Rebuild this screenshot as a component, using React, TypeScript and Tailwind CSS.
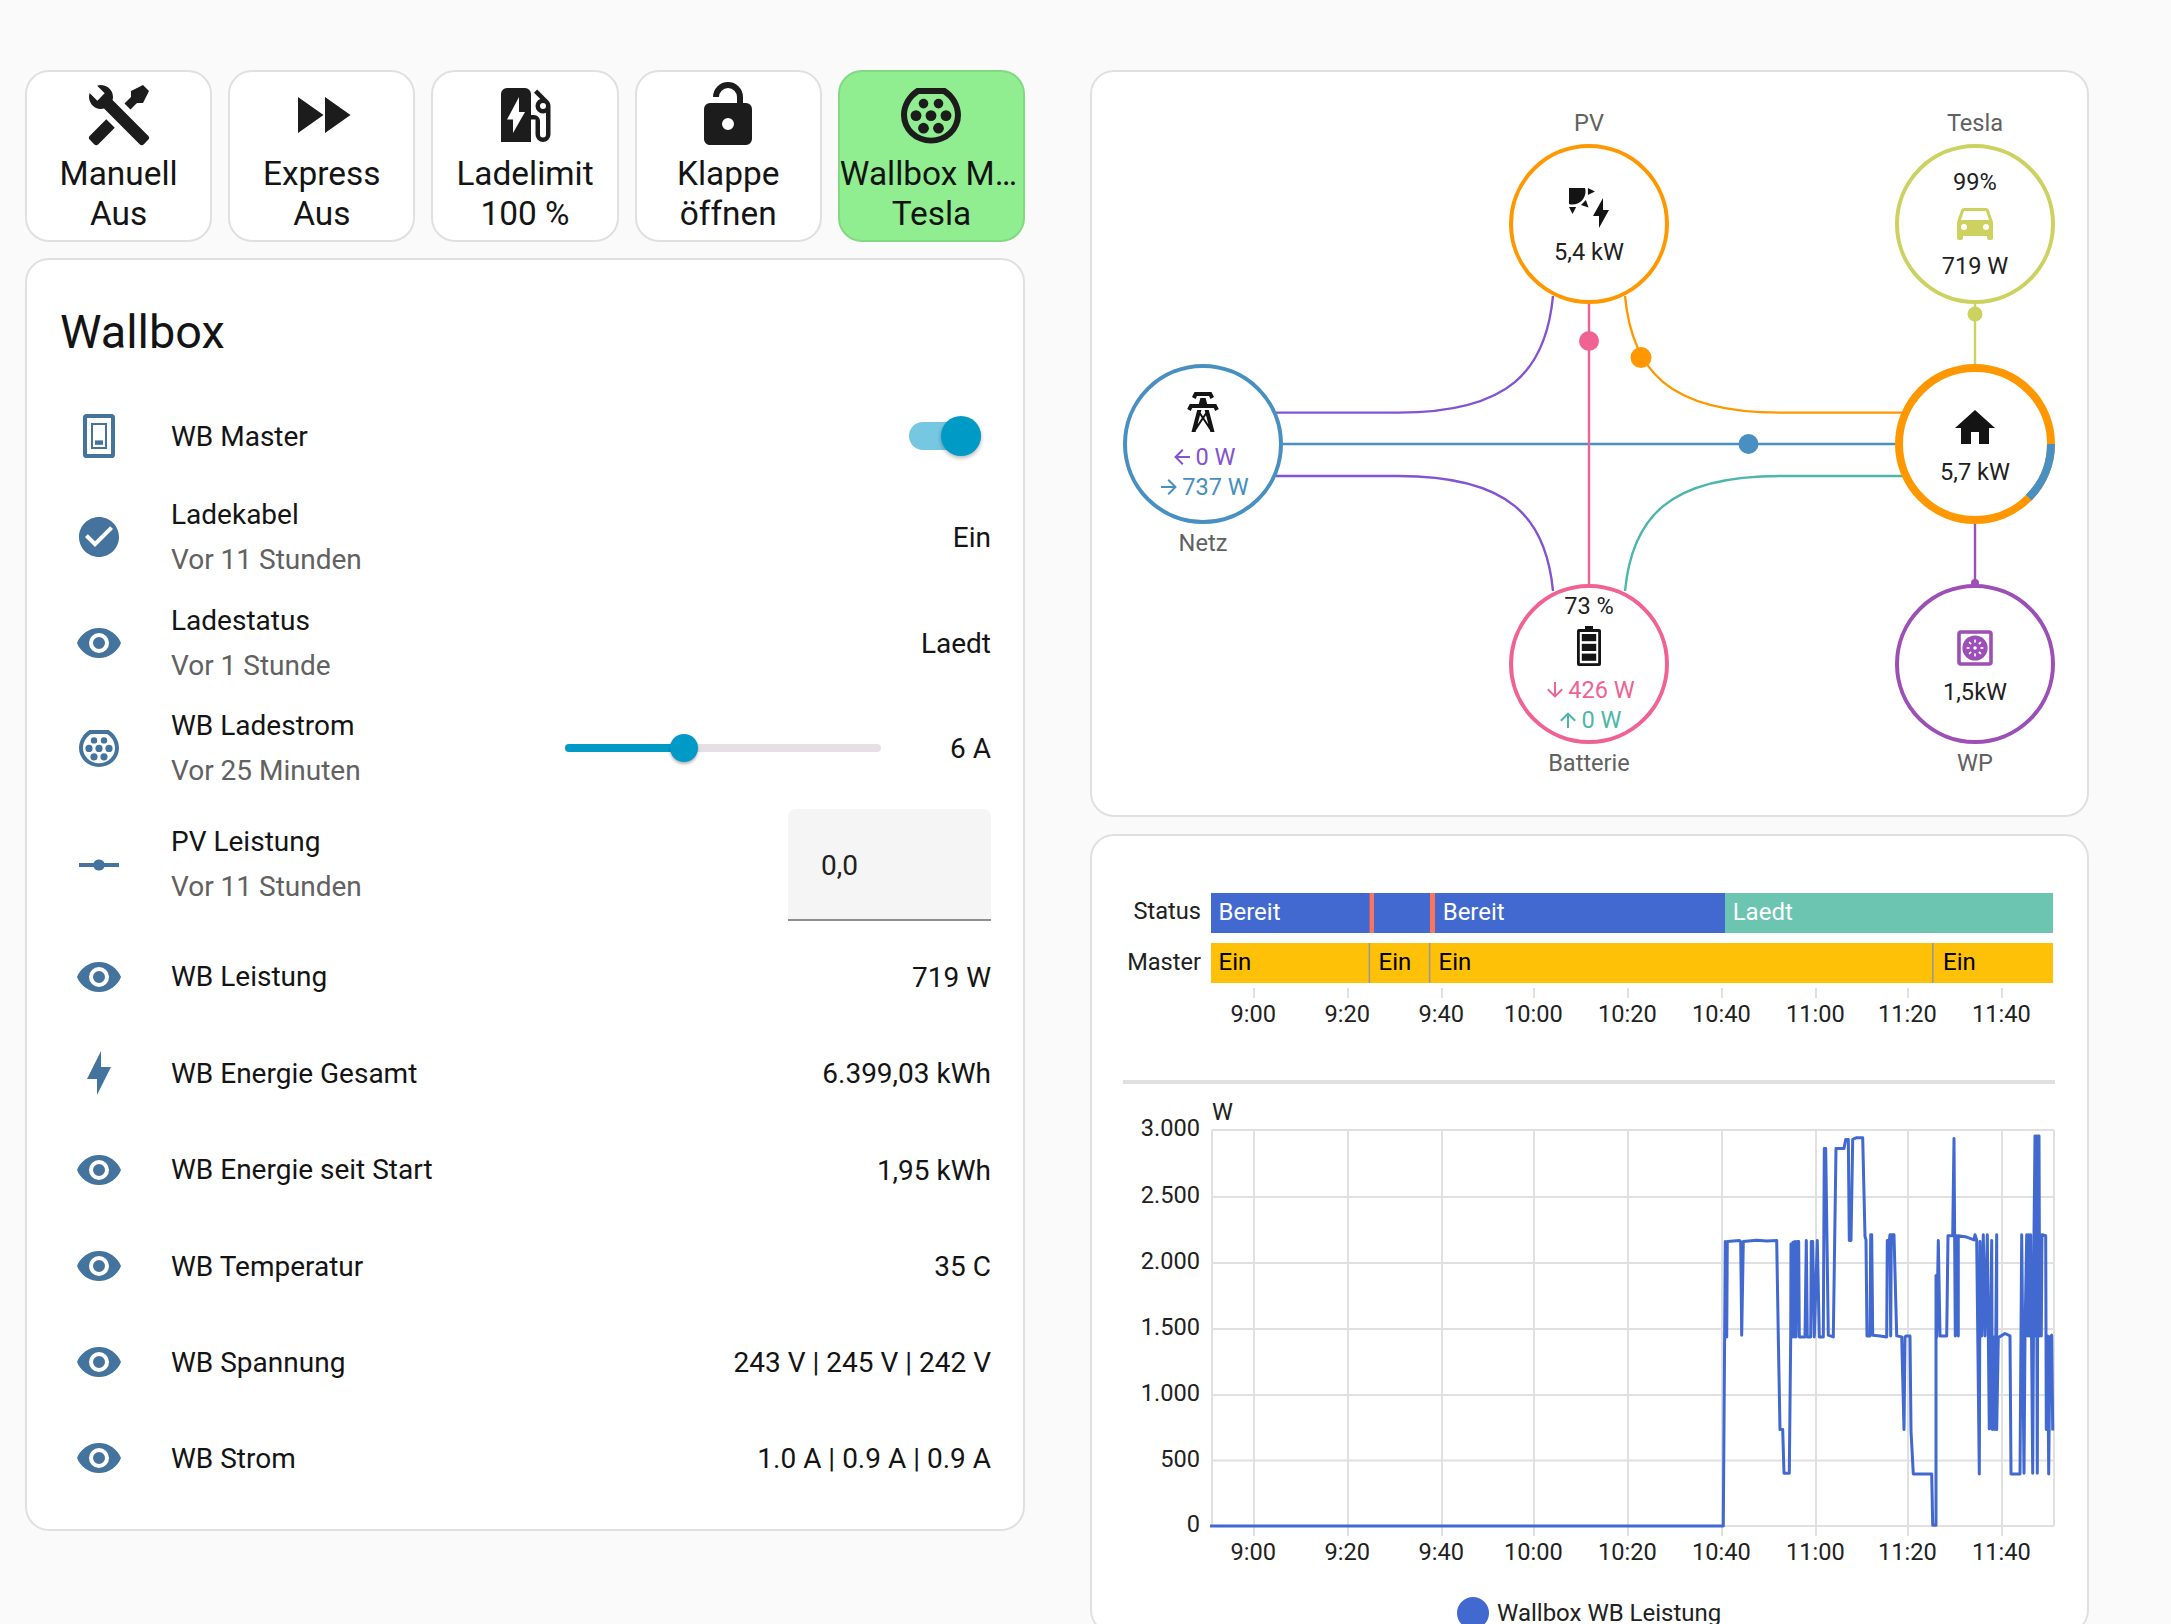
import React from "react";

const tools = "M21.71 20.29L20.29 21.71A1 1 0 0 1 18.88 21.71L7 9.85A3.81 3.81 0 0 1 6 10A4 4 0 0 1 2.22 4.7L4.76 7.24L5.29 6.71L6.71 5.29L7.24 4.76L4.7 2.22A4 4 0 0 1 10 6A3.81 3.81 0 0 1 9.85 7L21.71 18.88A1 1 0 0 1 21.71 20.29M2.29 18.88A1 1 0 0 0 2.29 20.29L3.71 21.71A1 1 0 0 0 5.12 21.71L10.59 16.25L7.76 13.42M20 2L16 4V6L13.83 8.17L15.83 10.17L18 8H20L22 4Z";
const fastForward = "M13,6V18L21.5,12M4,18L12.5,12L4,6V18Z";
const evStation = "M19.77,7.23L19.78,7.22L16.06,3.5L15,4.56L17.11,6.67C16.17,7 15.5,7.93 15.5,9A2.5,2.5 0 0,0 18,11.5C18.36,11.5 18.69,11.42 19,11.29V18.5A1,1 0 0,1 18,19.5A1,1 0 0,1 17,18.5V14A2,2 0 0,0 15,12H14V5A2,2 0 0,0 12,3H6A2,2 0 0,0 4,5V21H14V13.5H15.5V18.5A2.5,2.5 0 0,0 18,21A2.5,2.5 0 0,0 20.5,18.5V9C20.5,8.31 20.22,7.68 19.77,7.23M18,10A1,1 0 0,1 17,9A1,1 0 0,1 18,8A1,1 0 0,1 19,9A1,1 0 0,1 18,10M8,18V13.5H6L10,6V11H12L8,18Z";
const lockOpen = "M18,8A2,2 0 0,1 20,10V20A2,2 0 0,1 18,22H6C4.89,22 4,21.1 4,20V10A2,2 0 0,1 6,8H15V6A3,3 0 0,0 12,3A3,3 0 0,0 9,6H7A5,5 0 0,1 12,1A5,5 0 0,1 17,6V8H18M12,17A2,2 0 0,0 14,15A2,2 0 0,0 12,13A2,2 0 0,0 10,15A2,2 0 0,0 12,17Z";
const checkCircle = "M12 2C6.5 2 2 6.5 2 12S6.5 22 12 22 22 17.5 22 12 17.5 2 12 2M10 17L5 12L6.41 10.59L10 14.17L17.59 6.58L19 8L10 17Z";
const eye = "M12,9A3,3 0 0,0 9,12A3,3 0 0,0 12,15A3,3 0 0,0 15,12A3,3 0 0,0 12,9M12,17A5,5 0 0,1 7,12A5,5 0 0,1 12,7A5,5 0 0,1 17,12A5,5 0 0,1 12,17M12,4.5C7,4.5 2.73,7.61 1,12C2.73,16.39 7,19.5 12,19.5C17,19.5 21.27,16.39 23,12C21.27,7.61 17,4.5 12,4.5Z";
const rayVertex = "M2 11.5H9.3C9.7 10.3 10.7 9.7 12 9.7S14.3 10.3 14.7 11.5H22V13.5H14.7C14.3 14.7 13.3 15.3 12 15.3S9.7 14.7 9.3 13.5H2V11.5Z";
const bolt = "M11 15H6L13 1V9H18L11 23V15Z";
const home = "M10,20V14H14V20H19V12H22L12,3L2,12H5V20H10Z";
const tower = "M8.28,5.45L6.5,4.55L7.76,2H16.24L17.5,4.55L15.72,5.45L15,4H9L8.28,5.45M18.62,8H14.09L13.3,5H10.7L9.91,8H5.38L4.1,10.55L5.89,11.44L6.62,10H17.38L18.1,11.44L19.89,10.55L18.62,8M17.77,22H15.7L15.46,21.1L12,15.9L8.53,21.1L8.3,22H6.23L9.12,11H11.19L10.83,12.35L12,14.1L13.16,12.35L12.81,11H14.88L17.77,22M11.4,15L10.5,13.65L9.32,18.13L11.4,15M14.68,18.12L13.5,13.64L12.6,15L14.68,18.12Z";
const solarPower = "M11.45,2V5.55L15,3.77L11.45,2M10.45,8L8,10.46L11.75,11.71L10.45,8M2,11.45L3.77,15L5.55,11.45H2M10,2H2V10C2.57,10.17 3.17,10.25 3.77,10.25C7.35,10.26 10.26,7.35 10.27,3.75C10.26,3.16 10.17,2.57 10,2M17,22V16H14L19,7V13H22L17,22Z";
const car = "M5,11L6.5,6.5H17.5L19,11M17.5,16A1.5,1.5 0 0,1 16,14.5A1.5,1.5 0 0,1 17.5,13A1.5,1.5 0 0,1 19,14.5A1.5,1.5 0 0,1 17.5,16M6.5,16A1.5,1.5 0 0,1 5,14.5A1.5,1.5 0 0,1 6.5,13A1.5,1.5 0 0,1 8,14.5A1.5,1.5 0 0,1 6.5,16M18.92,6C18.72,5.42 18.16,5 17.5,5H6.5C5.84,5 5.28,5.42 5.08,6L3,12V20A1,1 0 0,0 4,21H5A1,1 0 0,0 6,20V19H18V20A1,1 0 0,0 19,21H20A1,1 0 0,0 21,20V12L18.92,6Z";
const arrowLeft = "M20,11V13H8L13.5,18.5L12.08,19.92L4.16,12L12.08,4.08L13.5,5.5L8,11H20Z";
const arrowRight = "M4,11V13H16L10.5,18.5L11.92,19.92L19.84,12L11.92,4.08L10.5,5.5L16,11H4Z";
const arrowDown = "M11,4H13V16L18.5,10.5L19.92,11.92L12,19.84L4.08,11.92L5.5,10.5L11,16V4Z";
const arrowUp = "M13,20H11V8L5.5,13.5L4.08,12.08L12,4.16L19.92,12.08L18.5,13.5L13,8V20Z";

function Icon({ d, className }: { d: string; className: string }) {
  return (
    <svg viewBox="0 0 24 24" className={"fill-current shrink-0 " + className}>
      <path d={d} />
    </svg>
  );
}

function PlugIcon({ className }: { className: string }) {
  return (
    <svg viewBox="0 0 24 24" className={"fill-current shrink-0 " + className}>
      <path
        fillRule="evenodd"
        d="M7.2 3H16.8C20 5 22 8.5 22 12A10 9.5 0 0 1 2 12C2 8.5 4 5 7.2 3ZM8 5C5.5 6.6 4 9.2 4 12A8 7.6 0 0 0 20 12C20 9.2 18.5 6.6 16 5Z"
      />
      <circle cx="9.5" cy="8.2" r="1.6" />
      <circle cx="14.5" cy="8.2" r="1.6" />
      <circle cx="7" cy="12.2" r="1.8" />
      <circle cx="12" cy="12.2" r="1.8" />
      <circle cx="17" cy="12.2" r="1.8" />
      <circle cx="9.5" cy="16.4" r="1.8" />
      <circle cx="14.5" cy="16.4" r="1.8" />
    </svg>
  );
}

function SwitchIcon({ className }: { className: string }) {
  return (
    <svg viewBox="0 0 24 24" className={"shrink-0 " + className}>
      <rect x="5" y="2" width="14" height="20" rx="0.8" fill="none" stroke="currentColor" strokeWidth="2" />
      <rect x="8.5" y="6" width="7" height="12" fill="none" stroke="currentColor" strokeWidth="1" />
      <rect x="10" y="14.2" width="4" height="2.2" fill="currentColor" />
    </svg>
  );
}

function BatteryIcon() {
  return (
    <svg viewBox="0 0 24 24" className="size-[48px] shrink-0">
      <path d="M10 2H14V3.5H17A1 1 0 0 1 18 4.5V21A1 1 0 0 1 17 22H7A1 1 0 0 1 6 21V4.5A1 1 0 0 1 7 3.5H10Z" fill="#141414" />
      <rect x="7.4" y="5" width="9.2" height="15.6" fill="#ffffff" />
      <rect x="8.4" y="6" width="7.2" height="3.6" fill="#141414" />
      <rect x="8.4" y="10.9" width="7.2" height="3.6" fill="#141414" />
      <rect x="8.4" y="15.8" width="7.2" height="3.6" fill="#141414" />
    </svg>
  );
}

function HeatPumpIcon() {
  const spokes = [0, 45, 90, 135, 180, 225, 270, 315];
  return (
    <svg viewBox="0 0 24 24" className="size-[48px] shrink-0 text-[#9b4fb7]">
      <rect x="4" y="4" width="16" height="16" rx="1" fill="none" stroke="currentColor" strokeWidth="1.8" />
      <circle cx="12" cy="12" r="6.3" fill="currentColor" />
      <circle cx="12" cy="12" r="0.9" fill="#ffffff" />
      {spokes.map((a) => (
        <rect key={a} x="11.6" y="7.8" width="0.8" height="1.5" fill="#ffffff" transform={`rotate(${a} 12 12)`} />
      ))}
    </svg>
  );
}

function ActionButton({ icon, name, state, active }: { icon: React.ReactNode; name: string; state: string; active?: boolean }) {
  return (
    <div
      className={
        "flex-1 min-w-0 h-[172px] rounded-[24px] border-2 pt-[7px] flex flex-col items-center text-[33.4px] leading-[40px] text-[#141414] " +
        (active ? "bg-[#90ee90] border-[#82d982]" : "bg-white border-[#e0e0e0]")
      }
    >
      {icon}
      <div className="w-full text-center truncate mt-[3px]">{name}</div>
      <div className="w-full text-center truncate">{state}</div>
    </div>
  );
}

function Row({ icon, name, sub, h, children }: { icon: React.ReactNode; name: string; sub?: string; h: string; children?: React.ReactNode }) {
  return (
    <div className={"flex items-center pl-[48px] pr-[32px] text-[28px] " + h}>
      <div className="w-[48px] shrink-0 text-[#44739e] flex justify-center">{icon}</div>
      <div className="ml-[48px] leading-[45px] whitespace-nowrap">
        <div className="text-[#141414]">{name}</div>
        {sub && <div className="text-[#616161]">{sub}</div>}
      </div>
      <div className="ml-auto mt-[2px] flex items-center text-[#141414]">{children}</div>
    </div>
  );
}

function WallboxCard() {
  const eyeIcon = <Icon d={eye} className="size-[48px]" />;
  return (
    <div className="rounded-[24px] border-2 border-[#e0e0e0] bg-white pb-[23px]">
      <div className="pl-[33px] pt-[40px] pb-[24px] text-[46.8px] leading-[64px] text-[#141414]">Wallbox</div>
      <Row icon={<SwitchIcon className="size-[48px]" />} name="WB Master" h="h-[96px]">
        <div className="relative w-[72px] h-[28px] mr-[10px] mb-[2px] rounded-full bg-[#76c8e2]">
          <div className="absolute right-0 top-[-6px] size-[40px] rounded-full bg-[#009ac7] shadow-[0_2px_4px_rgba(0,0,0,0.3)]" />
        </div>
      </Row>
      <Row icon={<Icon d={checkCircle} className="size-[48px]" />} name="Ladekabel" sub="Vor 11 Stunden" h="h-[106px]">Ein</Row>
      <Row icon={eyeIcon} name="Ladestatus" sub="Vor 1 Stunde" h="h-[105px]">Laedt</Row>
      <Row icon={<PlugIcon className="size-[48px]" />} name="WB Ladestrom" sub="Vor 25 Minuten" h="h-[105px]">
        <div className="relative w-[316px] h-[8px] mb-[2px] rounded-full bg-[#e6e0e6]">
          <div className="w-[119px] h-full rounded-full bg-[#009ac7]" />
          <div className="absolute left-[105px] top-[-10px] size-[28px] rounded-full bg-[#009ac7] shadow-[0_2px_3px_rgba(0,0,0,0.3)]" />
        </div>
        <div className="w-[110px] text-right">6 A</div>
      </Row>
      <Row icon={<Icon d={rayVertex} className="size-[48px]" />} name="PV Leistung" sub="Vor 11 Stunden" h="h-[128px]">
        <div className="w-[203px] h-[112px] rounded-t-[8px] bg-[#f5f5f5] border-b-2 border-[#8e8e8e] pl-[33px] pt-[4px] flex items-center text-[#212121]">0,0</div>
      </Row>
      <Row icon={eyeIcon} name="WB Leistung" h="h-[97px]">719 W</Row>
      <Row icon={<Icon d={bolt} className="size-[48px]" />} name="WB Energie Gesamt" h="h-[96px]">6.399,03 kWh</Row>
      <Row icon={eyeIcon} name="WB Energie seit Start" h="h-[97px]">1,95 kWh</Row>
      <Row icon={eyeIcon} name="WB Temperatur" h="h-[96px]">35 C</Row>
      <Row icon={eyeIcon} name="WB Spannung" h="h-[96px]">243 V | 245 V | 242 V</Row>
      <Row icon={eyeIcon} name="WB Strom" h="h-[96px]">1.0 A | 0.9 A | 0.9 A</Row>
    </div>
  );
}

// diagram node: sits on the free canvas of the flow card
function FlowNode({ pos, ring, label, labelPos, children }: { pos: string; ring: string; label?: string; labelPos?: string; children: React.ReactNode }) {
  return (
    <div className={"absolute size-[160px] " + pos}>
      <div className={"size-full rounded-full flex flex-col items-center text-[23.6px] text-[#212121] whitespace-nowrap " + ring}>{children}</div>
      {label && <div className={"absolute inset-x-0 text-center text-[23.6px] leading-[32px] text-[#616161] " + labelPos}>{label}</div>}
    </div>
  );
}

function FlowCard() {
  return (
    <div className="relative h-[747px] rounded-[24px] border-2 border-[#e0e0e0] bg-white">
      <svg viewBox="1092 72 995 743" className="absolute inset-0 w-[995px] h-[743px]" fill="none" strokeWidth="2.4">
        <path d="M1276 412.6H1398C1510 412.6 1546 370 1553 296" stroke="#8353d1" />
        <path d="M1276 476H1398C1510 476 1546 518 1553 591" stroke="#8353d1" />
        <path d="M1625 296C1632 370 1668 412.6 1780 412.6H1903" stroke="#ff9800" />
        <path d="M1903 476H1780C1668 476 1632 518 1625 591" stroke="#4db6ac" />
        <path d="M1283 444H1897" stroke="#488fc2" />
        <path d="M1589 303V585" stroke="#f06292" />
        <path d="M1975 303V366" stroke="#cdd15f" />
        <path d="M1975 522V585" stroke="#9b4fb7" />
        <circle cx="1748.5" cy="444" r="10" fill="#488fc2" stroke="none" />
        <circle cx="1589" cy="341" r="10" fill="#f06292" stroke="none" />
        <circle cx="1641" cy="357.6" r="10.5" fill="#ff9800" stroke="none" />
        <circle cx="1975" cy="314" r="7.5" fill="#cdd15f" stroke="none" />
        <circle cx="1975" cy="583" r="4" fill="#9b4fb7" stroke="none" />
        <circle cx="1975" cy="444" r="76" stroke="#ff9800" strokeWidth="8" />
        <path d="M2051 444A76 76 0 0 1 2028.7 497.7" stroke="#488fc2" strokeWidth="8" />
      </svg>

      <FlowNode pos="left-[417px] top-[72px]" ring="border-4 border-[#ff9800] pt-[36px]" label="PV" labelPos="top-[-37px]">
        <Icon d={solarPower} className="size-[48px] text-[#141414]" />
        <div className="leading-[40px]">5,4 kW</div>
      </FlowNode>
      <FlowNode pos="left-[803px] top-[72px]" ring="border-4 border-[#cdd15f] pt-[18px]" label="Tesla" labelPos="top-[-37px]">
        <div className="leading-[32px]">99%</div>
        <Icon d={car} className="size-[48px] text-[#cdd15f]" />
        <div className="leading-[32px] mt-[4px]">719 W</div>
      </FlowNode>
      <FlowNode pos="left-[31px] top-[292px]" ring="border-4 border-[#488fc2] pt-[20px]" label="Netz" labelPos="top-[163px]">
        <Icon d={tower} className="size-[48px] text-[#141414]" />
        <div className="leading-[30px] mt-[6px] flex items-center gap-[1px] text-[#8353d1]">
          <Icon d={arrowLeft} className="size-[24px]" />0 W
        </div>
        <div className="leading-[30px] flex items-center gap-[1px] text-[#488fc2]">
          <Icon d={arrowRight} className="size-[24px]" />737 W
        </div>
      </FlowNode>
      <FlowNode pos="left-[803px] top-[292px]" ring="pt-[40px]">
        <Icon d={home} className="size-[48px] text-[#141414]" />
        <div className="leading-[40px]">5,7 kW</div>
      </FlowNode>
      <FlowNode pos="left-[417px] top-[512px]" ring="border-4 border-[#f06292] pt-[4px]" label="Batterie" labelPos="top-[163px]">
        <div className="leading-[28px]">73 %</div>
        <div className="mt-[2px]"><BatteryIcon /></div>
        <div className="leading-[30px] mt-[5px] flex items-center gap-[1px] text-[#f06292]">
          <Icon d={arrowDown} className="size-[24px]" />426 W
        </div>
        <div className="leading-[30px] flex items-center gap-[1px] text-[#4db6ac]">
          <Icon d={arrowUp} className="size-[24px]" />0 W
        </div>
      </FlowNode>
      <FlowNode pos="left-[803px] top-[512px]" ring="border-4 border-[#9b4fb7] pt-[36px]" label="WP" labelPos="top-[163px]">
        <HeatPumpIcon />
        <div className="leading-[40px]">1,5kW</div>
      </FlowNode>
    </div>
  );
}

const axisTicks: [number, string][] = [
  [1254, "9:00"], [1348, "9:20"], [1442, "9:40"], [1534, "10:00"], [1628, "10:20"],
  [1722, "10:40"], [1816, "11:00"], [1908, "11:20"], [2002, "11:40"],
];
const yTicks: [number, string][] = [
  [1130, "3.000"], [1197, "2.500"], [1263, "2.000"], [1329, "1.500"], [1395, "1.000"], [1460.6, "500"], [1526, "0"],
];

// traced from the chart, x = 1680 + tx / 3, y = 1090 + ty / 2.936
const trace = [
  [-1410,1280],[130,1280],[136,445],[140,725],[142,445],[178,442],[182,445],[185,720],[190,445],[230,441],[260,443],[290,442],[295,725],[300,997],[308,997],[312,1125],[328,1125],[332,725],[333,452],[337,725],[339,447],[343,725],[345,445],[348,725],[352,445],[356,445],[358,725],[375,725],[379,442],[382,725],[392,725],[394,445],[398,445],[403,725],[412,442],[418,725],[430,725],[433,172],[437,172],[445,720],[460,725],[468,172],[492,172],[497,145],[505,145],[508,442],[513,442],[518,145],[530,140],[548,140],[555,430],[558,440],[561,722],[570,722],[572,425],[575,425],[578,720],[600,722],[620,725],[622,442],[628,442],[630,425],[632,722],[634,425],[642,425],[650,722],[665,725],[672,997],[675,725],[680,722],[690,722],[693,1000],[700,1127],[755,1127],[758,1278],[768,1278],[768,545],[770,725],[775,442],[780,722],[800,722],[804,428],[818,428],[822,142],[826,722],[830,428],[835,722],[835,428],[860,432],[882,440],[885,425],[890,440],[898,1127],[900,445],[905,722],[910,425],[915,722],[922,425],[928,995],[935,442],[937,997],[942,725],[945,997],[950,425],[950,997],[955,727],[975,715],[990,722],[993,1127],[1020,1127],[1025,425],[1032,1125],[1035,722],[1040,425],[1043,722],[1046,425],[1049,722],[1052,425],[1058,1125],[1062,425],[1065,135],[1067,722],[1069,135],[1072,1125],[1074,135],[1077,135],[1079,722],[1082,425],[1084,722],[1086,425],[1097,428],[1099,997],[1103,722],[1106,1127],[1110,725],[1115,720],[1118,1000],
];
const tracePoints = trace.map(([x, y]) => `${(1680 + x / 3).toFixed(1)},${(1090 + y / 2.936).toFixed(1)}`).join(" ");

function ChartText({ x, y, anchor, fill, size, children }: { x: number; y: number; anchor?: "start" | "middle" | "end"; fill?: string; size?: number; children: React.ReactNode }) {
  return (
    <text x={x} y={y} textAnchor={anchor ?? "start"} dominantBaseline="central" fill={fill ?? "#212121"} fontSize={size ?? 23.6}>
      {children}
    </text>
  );
}

function HistoryCard() {
  return (
    <div className="h-[800px] rounded-[24px] border-2 border-[#e0e0e0] bg-white">
      <svg viewBox="1092 836 995 790" className="w-[995px] h-[790px]">
        {/* state timeline */}
        <ChartText x={1201} y={911} anchor="end">Status</ChartText>
        <ChartText x={1201} y={962} anchor="end">Master</ChartText>
        <rect x="1211" y="893" width="514" height="40" fill="#4269d0" />
        <rect x="1369.6" y="893" width="4.4" height="40" fill="#ff725c" />
        <rect x="1430" y="893" width="5" height="40" fill="#ff725c" />
        <rect x="1725" y="893" width="328" height="40" fill="#6cc5b0" />
        <rect x="1211" y="943" width="842" height="40" fill="#ffc107" />
        <rect x="1368.6" y="943" width="1.6" height="40" fill="#999999" />
        <rect x="1428.8" y="943" width="1.6" height="40" fill="#999999" />
        <rect x="1932" y="943" width="1.6" height="40" fill="#999999" />
        <ChartText x={1218.5} y={912} fill="#ffffff" size={24}>Bereit</ChartText>
        <ChartText x={1442.7} y={912} fill="#ffffff" size={24}>Bereit</ChartText>
        <ChartText x={1732.7} y={912} fill="#ffffff" size={24}>Laedt</ChartText>
        <ChartText x={1218.5} y={962} fill="#000000" size={24}>Ein</ChartText>
        <ChartText x={1378.5} y={962} fill="#000000" size={24}>Ein</ChartText>
        <ChartText x={1438.5} y={962} fill="#000000" size={24}>Ein</ChartText>
        <ChartText x={1943} y={962} fill="#000000" size={24}>Ein</ChartText>
        {axisTicks.map(([x, t]) => (
          <g key={t}>
            <line x1={x} x2={x} y1="988" y2="998" stroke="#e0e0e0" strokeWidth="2" />
            <ChartText x={x - 0.7} y={1013.5} anchor="middle">{t}</ChartText>
          </g>
        ))}
        <rect x="1123" y="1080" width="932" height="4" fill="#e0e0e0" />

        {/* power chart */}
        <ChartText x={1212} y={1112}>W</ChartText>
        {yTicks.map(([y, t]) => (
          <g key={t}>
            <line x1="1212" x2="2054" y1={y} y2={y} stroke="#e0e0e0" strokeWidth="2" />
            <ChartText x={1200} y={y - 2} anchor="end">{t}</ChartText>
          </g>
        ))}
        <line x1="1212" x2="1212" y1="1130" y2="1526" stroke="#e0e0e0" strokeWidth="2" />
        <line x1="2054" x2="2054" y1="1130" y2="1526" stroke="#e0e0e0" strokeWidth="2" />
        {axisTicks.map(([x, t]) => (
          <g key={t}>
            <line x1={x} x2={x} y1="1130" y2="1536" stroke="#e0e0e0" strokeWidth="2" />
            <ChartText x={x - 0.7} y={1551.5} anchor="middle">{t}</ChartText>
          </g>
        ))}
        <polyline points={tracePoints} fill="none" stroke="#4269d0" strokeWidth="3" strokeLinejoin="round" />

        <circle cx="1473" cy="1613" r="16" fill="#4269d0" />
        <ChartText x={1497} y={1613} size={24}>Wallbox WB Leistung</ChartText>
      </svg>
    </div>
  );
}

export default function App() {
  return (
    <div className="h-[1624px] overflow-hidden bg-[#fafafa] font-['Roboto',sans-serif]">
      <div className="flex pt-[70px] pl-[25px]">
        <div className="w-[1000px] shrink-0 flex flex-col gap-[16px]">
          <div className="flex gap-[16px]">
            <ActionButton icon={<Icon d={tools} className="size-[72px] text-[#1c1c1c]" />} name="Manuell" state="Aus" />
            <ActionButton icon={<Icon d={fastForward} className="size-[72px] text-[#1c1c1c]" />} name="Express" state="Aus" />
            <ActionButton icon={<Icon d={evStation} className="size-[72px] text-[#1c1c1c]" />} name="Ladelimit" state="100 %" />
            <ActionButton icon={<Icon d={lockOpen} className="size-[72px] text-[#1c1c1c]" />} name="Klappe" state="öffnen" />
            <ActionButton icon={<PlugIcon className="size-[72px] text-[#1c1c1c]" />} name="Wallbox Master" state="Tesla" active />
          </div>
          <WallboxCard />
        </div>
        <div className="ml-[65px] w-[999px] shrink-0 flex flex-col gap-[17px]">
          <FlowCard />
          <HistoryCard />
        </div>
      </div>
    </div>
  );
}
